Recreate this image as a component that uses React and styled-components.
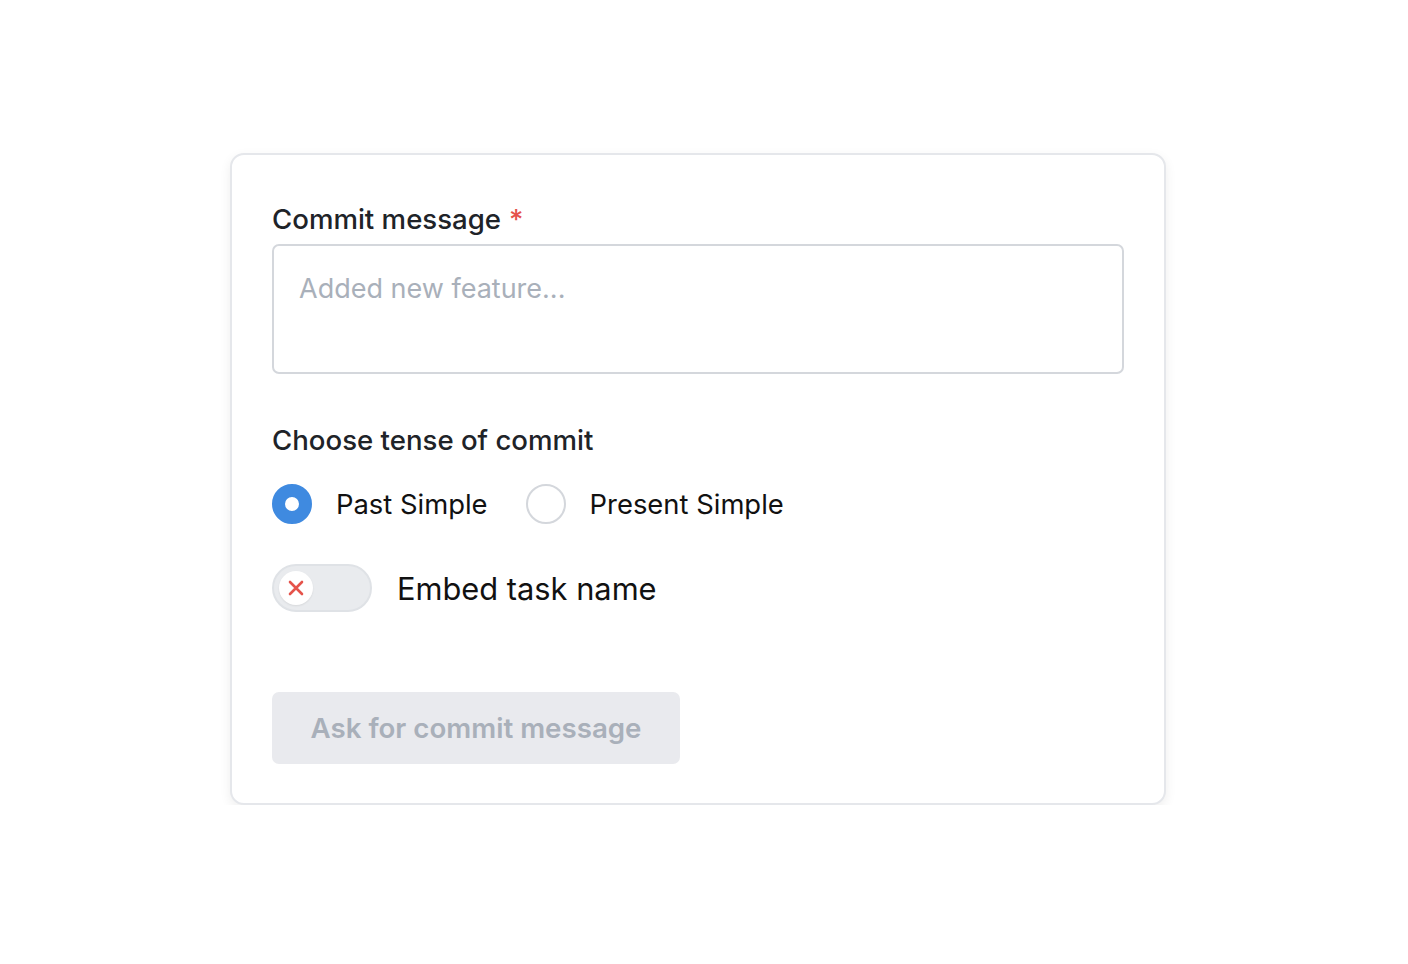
import React, { useState } from "react";
import styled, { createGlobalStyle } from "styled-components";

const Global = createGlobalStyle`
  body {
    margin: 0;
    background: #ffffff;
    font-family: Inter, "Noto Sans", sans-serif;
    color: #1f2328;
  }
`;

const Page = styled.div`
  padding: 153px 0 0 230px;
`;

const Card = styled.div`
  width: 936px;
  box-sizing: border-box;
  border: 2px solid #e5e7eb;
  border-radius: 14px;
  padding: 40px 40px 39px;
  background: #fff;
  box-shadow: 0 4px 12px rgba(0, 0, 0, 0.07);
  display: flex;
  flex-direction: column;
`;

const Label = styled.label`
  font-size: 27.6px;
  font-weight: 500;
  color: #202328;
  line-height: 49px;
  display: block;
`;

const Star = styled.span`
  color: #e5534b;
  margin-left: 8px;
`;

const TextArea = styled.textarea`
  width: 100%;
  height: 130px;
  box-sizing: border-box;
  border: 2px solid #d4d7dc;
  border-radius: 7px;
  padding: 26px 25px;
  font-family: inherit;
  font-size: 27px;
  resize: none;
  outline: none;
  &::placeholder {
    color: #a9b0ba;
  }
`;

const Section = styled.div`
  margin-top: ${(p) => p.$top}px;
`;

const RadioRow = styled.div`
  display: flex;
  align-items: center;
  gap: 38px;
  margin-top: 19px;
`;

const RadioItem = styled.label`
  display: flex;
  align-items: center;
  gap: 24px;
  cursor: pointer;
  font-size: 27.4px;
  color: #111;
`;

const Dot = styled.span`
  width: 40px;
  height: 40px;
  box-sizing: border-box;
  border-radius: 50%;
  border: ${(p) => (p.$on ? "13px solid #3f8ae0" : "2px solid #d4d7dc")};
  background: #fff;
`;

const ToggleRow = styled.div`
  display: flex;
  align-items: center;
  gap: 25px;
  margin-top: 40px;
`;

const Toggle = styled.button`
  width: 100px;
  height: 48px;
  box-sizing: border-box;
  border: 2px solid #dfe2e6;
  border-radius: 24px;
  background: #e9ebee;
  padding: 0 5px;
  display: flex;
  align-items: center;
  cursor: pointer;
`;

const Knob = styled.span`
  width: 34px;
  height: 34px;
  border-radius: 50%;
  background: #fff;
  display: flex;
  align-items: center;
  justify-content: center;
  box-shadow: 0 1px 2px rgba(0, 0, 0, 0.08);
`;

const ToggleLabel = styled.span`
  font-size: 30.8px;
  color: #111;
`;

const Submit = styled.button`
  margin-top: 80px;
  width: 408px;
  height: 72px;
  border: none;
  border-radius: 7px;
  background: #e9eaee;
  color: #a9b0ba;
  font-family: inherit;
  font-size: 27.7px;
  font-weight: 600;
  cursor: not-allowed;
`;

export default function App() {
  const [tense, setTense] = useState("past");
  return (
    <>
      <Global />
      <Page>
        <Card>
          <Label>
            Commit message<Star>*</Star>
          </Label>
          <TextArea placeholder="Added new feature..." />
          <Section $top={42}>
            <Label>Choose tense of commit</Label>
            <RadioRow>
              <RadioItem onClick={() => setTense("past")}>
                <Dot $on={tense === "past"} />
                Past Simple
              </RadioItem>
              <RadioItem onClick={() => setTense("present")}>
                <Dot $on={tense === "present"} />
                Present Simple
              </RadioItem>
            </RadioRow>
          </Section>
          <ToggleRow>
            <Toggle>
              <Knob>
                <svg width="18" height="18" viewBox="0 0 18 18">
                  <path d="M3 3 L15 15 M15 3 L3 15" stroke="#e5534b" strokeWidth="2.6" strokeLinecap="round" />
                </svg>
              </Knob>
            </Toggle>
            <ToggleLabel>Embed task name</ToggleLabel>
          </ToggleRow>
          <div>
            <Submit disabled>Ask for commit message</Submit>
          </div>
        </Card>
      </Page>
    </>
  );
}
